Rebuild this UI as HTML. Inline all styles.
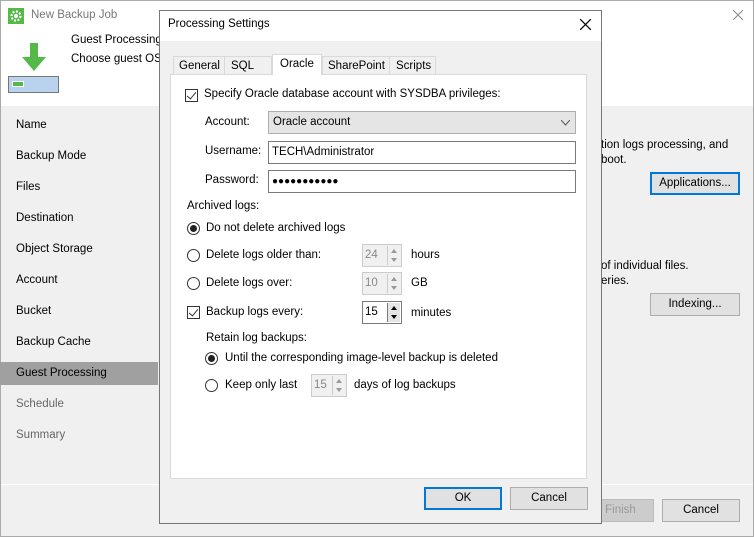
<!DOCTYPE html>
<html><head><meta charset="utf-8"><style>
*{box-sizing:border-box;margin:0;padding:0}
body{width:754px;height:537px;position:relative;overflow:hidden;font-family:"Liberation Sans",sans-serif;font-size:11.5px;color:#000;background:#f0f0f0}
.a{position:absolute;white-space:nowrap}
.btn{position:absolute;background:#e1e1e1;border:1px solid #adadad;text-align:center;line-height:20px;font-size:11.5px}
.btn.f{border:2px solid #0078d7;line-height:18px}
.cb{position:absolute;width:13px;height:13px;border:1px solid #333;background:#fff}
.cb:after{content:"";position:absolute;left:3px;top:0px;width:4px;height:8px;border-right:1.5px solid #333;border-bottom:1.5px solid #333;transform:rotate(40deg)}
.rb{position:absolute;width:13px;height:13px;border:1px solid #333;border-radius:50%;background:#fff}
.rb.on:after{content:"";position:absolute;left:2px;top:2px;width:7px;height:7px;border-radius:50%;background:#222}
.in{position:absolute;background:#fff;border:1px solid #7a7a7a;height:23px;line-height:21px;padding-left:3px}
.sp{position:absolute;height:23px;border:1px solid #ccc;background:#f0f0f0;color:#888;line-height:21px;padding-left:2px}
.sp .ar{position:absolute;right:1px;top:1px;width:13px;height:19px;border-left:1px solid #ccc}
.sp .ar:before{content:"";position:absolute;left:3px;top:3px;border:3px solid transparent;border-bottom:4px solid #999;border-top:0}
.sp .ar:after{content:"";position:absolute;left:3px;top:12px;border:3px solid transparent;border-top:4px solid #999;border-bottom:0}
.sp.en{border-color:#7a7a7a;background:#fff;color:#000}
.sp.en .ar{border-left:1px solid #7a7a7a;background:#e5e5e5}
.sp.en .ar:before{border-bottom-color:#000}.sp.en .ar:after{border-top-color:#000}
.nav{position:absolute;left:16px}
</style></head><body>
<div class="a" style="left:0;top:0;width:754px;height:537px;border:1px solid #aaa"></div>
<div class="a" style="left:1px;top:1px;width:752px;height:105px;background:#fff"></div>
<svg class="a" style="left:8px;top:8px" width="16" height="16" viewBox="0 0 16 16"><rect width="16" height="16" fill="#54b948"/><circle cx="8" cy="8" r="4.5" fill="none" stroke="#fff" stroke-width="2.2" stroke-dasharray="2 1.5"/><circle cx="8" cy="8" r="2" fill="#fff"/></svg>
<div class="a" style="left:31px;top:9px;color:#777">New Backup Job</div>
<svg class="a" style="left:19px;top:43px" width="30" height="30" viewBox="0 0 30 30"><path d="M11 0h8v14h8L15 28 3 14h8z" fill="#54b948"/></svg>
<div class="a" style="left:8px;top:76px;width:51px;height:17px;border:1px solid #777;background:#b9d3ee"></div>
<div class="a" style="left:13px;top:82px;width:10px;height:4px;background:#54b948;outline:1px solid #fff"></div>
<div class="a" style="left:71px;top:34px">Guest Processing</div>
<div class="a" style="left:71px;top:53px">Choose guest OS</div>
<div class="a" style="left:0;top:362px;width:158px;height:23px;background:#a0a0a0"></div>
<div class="nav a" style="top:119px">Name</div>
<div class="nav a" style="top:150px">Backup Mode</div>
<div class="nav a" style="top:181px">Files</div>
<div class="nav a" style="top:212px">Destination</div>
<div class="nav a" style="top:243px">Object Storage</div>
<div class="nav a" style="top:274px">Account</div>
<div class="nav a" style="top:305px">Bucket</div>
<div class="nav a" style="top:336px">Backup Cache</div>
<div class="nav a" style="top:367px">Guest Processing</div>
<div class="nav a" style="top:398px;color:#666">Schedule</div>
<div class="nav a" style="top:429px;color:#666">Summary</div>
<div class="a" style="left:1px;top:484px;width:752px;height:1px;background:#fff"></div>
<div class="a" style="left:601px;top:139px">tion logs processing, and</div>
<div class="a" style="left:601px;top:154px">boot.</div>
<div class="btn f" style="left:650px;top:172px;width:90px;height:23px">Applications...</div>
<div class="a" style="left:601px;top:260px">of individual files.</div>
<div class="a" style="left:601px;top:275px">eries.</div>
<div class="btn" style="left:650px;top:293px;width:90px;height:23px">Indexing...</div>
<div class="btn" style="left:587px;top:499px;width:67px;height:23px;color:#999;background:#ccc;border-color:#bbb">Finish</div>
<div class="btn" style="left:662px;top:499px;width:78px;height:23px">Cancel</div>
<div class="a" style="left:159px;top:10px;width:443px;height:514px;border:1px solid #777;background:#f0f0f0"></div>
<div class="a" style="left:160px;top:11px;width:441px;height:30px;background:#fff"></div>
<div class="a" style="left:168px;top:18px">Processing Settings</div>
<svg class="a" style="left:580px;top:19px" width="11" height="11"><path d="M0 0L11 11M11 0L0 11" stroke="#000" stroke-width="1.2"/></svg>
<svg class="a" style="left:733px;top:10px" width="10" height="10"><path d="M0 0L10 10M10 0L0 10" stroke="#888" stroke-width="1"/></svg>
<div class="a" style="left:170px;top:74px;width:417px;height:405px;background:#fff;border:1px solid #d9d9d9"></div>
<div class="a" style="left:173px;top:56px;width:52px;height:19px;border:1px solid #d9d9d9;background:#f0f0f0;padding:3px 0 0 5px">General</div>
<div class="a" style="left:224px;top:56px;width:48px;height:19px;border:1px solid #d9d9d9;background:#f0f0f0;padding:3px 0 0 6px">SQL</div>
<div class="a" style="left:272px;top:54px;width:50px;height:21px;border:1px solid #d9d9d9;border-bottom:none;background:#fff;padding:3px 0 0 7px">Oracle</div>
<div class="a" style="left:322px;top:56px;width:68px;height:19px;border:1px solid #d9d9d9;background:#f0f0f0;padding:3px 0 0 5px">SharePoint</div>
<div class="a" style="left:389px;top:56px;width:47px;height:19px;border:1px solid #d9d9d9;background:#f0f0f0;padding:3px 0 0 6px">Scripts</div>
<div class="cb" style="left:185px;top:89px"></div>
<div class="a" style="left:204px;top:88px">Specify Oracle database account with SYSDBA privileges:</div>
<div class="a" style="left:205px;top:116px">Account:</div>
<div class="a" style="left:268px;top:111px;width:308px;height:23px;background:#e5e5e5;border:1px solid #adadad;padding:4px 0 0 4px">Oracle account</div>
<svg class="a" style="left:561px;top:120px" width="9" height="6"><path d="M0 0L4.5 5L9 0" fill="none" stroke="#555"/></svg>
<div class="a" style="left:205px;top:145px">Username:</div>
<div class="in" style="left:268px;top:141px;width:308px">TECH\Administrator</div>
<div class="a" style="left:205px;top:174px">Password:</div>
<div class="in" style="left:268px;top:170px;width:308px;font-size:10px">●●●●●●●●●●●</div>
<div class="a" style="left:187px;top:200px">Archived logs:</div>
<div class="rb on" style="left:187px;top:222px"></div>
<div class="a" style="left:206px;top:222px">Do not delete archived logs</div>
<div class="rb" style="left:187px;top:249px"></div>
<div class="a" style="left:206px;top:249px">Delete logs older than:</div>
<div class="sp" style="left:362px;top:244px;width:40px">24<div class="ar"></div></div>
<div class="a" style="left:411px;top:249px">hours</div>
<div class="rb" style="left:187px;top:277px"></div>
<div class="a" style="left:206px;top:277px">Delete logs over:</div>
<div class="sp" style="left:362px;top:272px;width:40px">10<div class="ar"></div></div>
<div class="a" style="left:411px;top:277px">GB</div>
<div class="cb" style="left:187px;top:306px"></div>
<div class="a" style="left:206px;top:306px">Backup logs every:</div>
<div class="sp en" style="left:362px;top:301px;width:40px">15<div class="ar"></div></div>
<div class="a" style="left:411px;top:307px">minutes</div>
<div class="a" style="left:206px;top:332px">Retain log backups:</div>
<div class="rb on" style="left:205px;top:352px"></div>
<div class="a" style="left:225px;top:352px">Until the corresponding image-level backup is deleted</div>
<div class="rb" style="left:205px;top:379px"></div>
<div class="a" style="left:225px;top:379px">Keep only last</div>
<div class="sp" style="left:311px;top:374px;width:36px">15<div class="ar"></div></div>
<div class="a" style="left:354px;top:379px">days of log backups</div>
<div class="btn f" style="left:424px;top:487px;width:78px;height:23px">OK</div>
<div class="btn" style="left:510px;top:487px;width:78px;height:23px">Cancel</div>
</body></html>
